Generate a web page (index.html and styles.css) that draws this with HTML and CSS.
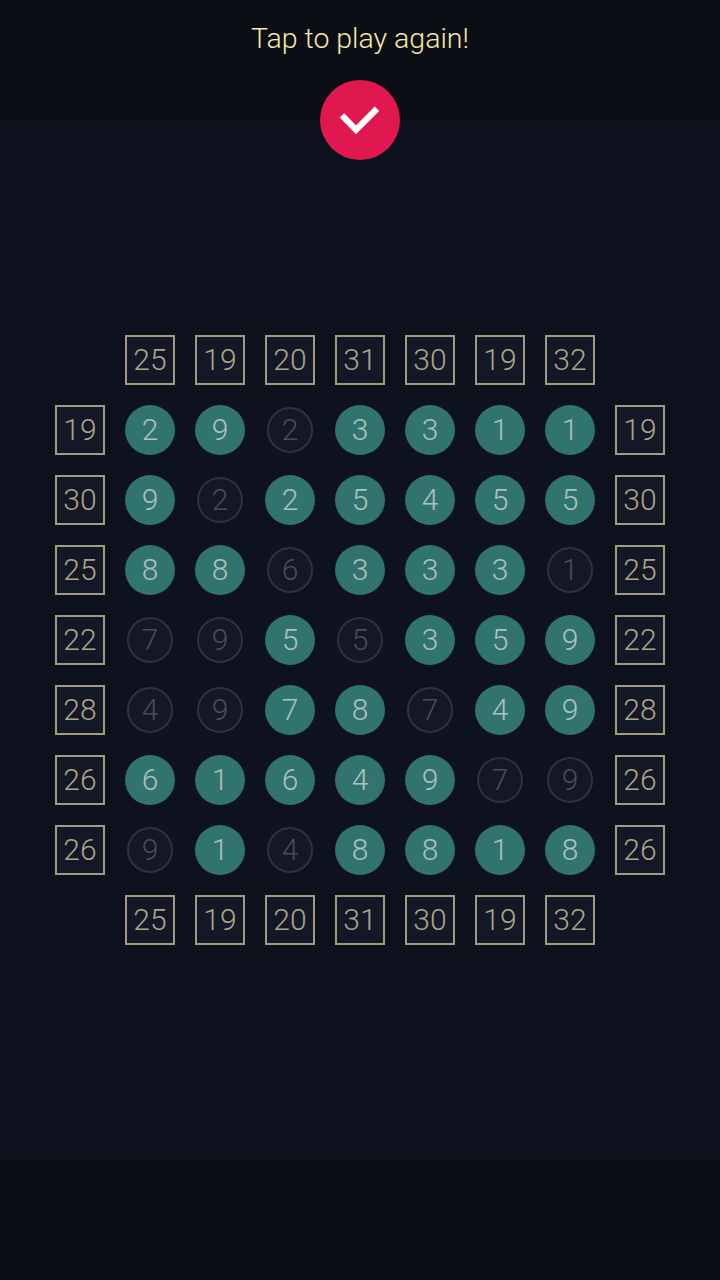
FILE: index.html
```html
<!DOCTYPE html>
<html lang="en">
<head>
    <meta charset="UTF-8">
    <link rel="stylesheet" href="styles.css">
    <title>Tap to play again</title>
</head>
<body>
    <div class="top-bar">
        <div class="message">Tap to play again!</div>
        <div class="check-btn">
            <svg width="40" height="28" viewBox="0 0 40 28"><path d="M2 9.300 L16 23.800 L37 2.700" fill="none" stroke="#fff" stroke-width="6.200"/></svg>
        </div>
    </div>

    <div class="board-wrap">
        <div class="board">
            <div class="cell"></div>
            <div class="cell clue">25</div><div class="cell clue">19</div><div class="cell clue">20</div><div class="cell clue">31</div><div class="cell clue">30</div><div class="cell clue">19</div><div class="cell clue">32</div>
            <div class="cell"></div>

            <div class="cell clue">19</div>
            <div class="cell on">2</div><div class="cell on">9</div><div class="cell off">2</div><div class="cell on">3</div><div class="cell on">3</div><div class="cell on">1</div><div class="cell on">1</div>
            <div class="cell clue">19</div>

            <div class="cell clue">30</div>
            <div class="cell on">9</div><div class="cell off">2</div><div class="cell on">2</div><div class="cell on">5</div><div class="cell on">4</div><div class="cell on">5</div><div class="cell on">5</div>
            <div class="cell clue">30</div>

            <div class="cell clue">25</div>
            <div class="cell on">8</div><div class="cell on">8</div><div class="cell off">6</div><div class="cell on">3</div><div class="cell on">3</div><div class="cell on">3</div><div class="cell off">1</div>
            <div class="cell clue">25</div>

            <div class="cell clue">22</div>
            <div class="cell off">7</div><div class="cell off">9</div><div class="cell on">5</div><div class="cell off">5</div><div class="cell on">3</div><div class="cell on">5</div><div class="cell on">9</div>
            <div class="cell clue">22</div>

            <div class="cell clue">28</div>
            <div class="cell off">4</div><div class="cell off">9</div><div class="cell on">7</div><div class="cell on">8</div><div class="cell off">7</div><div class="cell on">4</div><div class="cell on">9</div>
            <div class="cell clue">28</div>

            <div class="cell clue">26</div>
            <div class="cell on">6</div><div class="cell on">1</div><div class="cell on">6</div><div class="cell on">4</div><div class="cell on">9</div><div class="cell off">7</div><div class="cell off">9</div>
            <div class="cell clue">26</div>

            <div class="cell clue">26</div>
            <div class="cell off">9</div><div class="cell on">1</div><div class="cell off">4</div><div class="cell on">8</div><div class="cell on">8</div><div class="cell on">1</div><div class="cell on">8</div>
            <div class="cell clue">26</div>

            <div class="cell"></div>
            <div class="cell clue">25</div><div class="cell clue">19</div><div class="cell clue">20</div><div class="cell clue">31</div><div class="cell clue">30</div><div class="cell clue">19</div><div class="cell clue">32</div>
            <div class="cell"></div>
        </div>
    </div>

    <div class="bottom-bar"></div>
</body>
</html>
```

FILE: styles.css
```css
body{
    margin: 0;
    padding: 0;
    height: 1280px;
    display: flex;
    flex-direction: column;
    background: #0e121c;
    font-family: Roboto, sans-serif;
    font-weight: 300;
    overflow: hidden;
}
.top-bar{
    height: 120px;
    background: #0b0e15;
    position: relative;
    text-align: center;
}
.message{
    padding-top: 21px;
    font-size: 28.500px;
    line-height: 36px;
    color: #f7e8ab;
}
/* sits half over the bar, half over the board area */
.check-btn{
    position: absolute;
    top: 80px;
    left: 320px;
    width: 80px;
    height: 80px;
    border-radius: 50%;
    background: #df194f;
    display: flex;
    align-items: center;
    justify-content: center;
}
.board-wrap{
    flex: 1;
    display: flex;
    align-items: center;
    justify-content: center;
}
.board{
    display: grid;
    grid-template-columns: repeat(9, 50px);
    grid-auto-rows: 50px;
    gap: 20px;
}
.cell{
    display: flex;
    align-items: center;
    justify-content: center;
    box-sizing: border-box;
    font-size: 30px;
    line-height: 34px;
}
.clue{
    border: 2px solid #a09a7e;
    background: #141726;
    color: #aca586;
}
.on{
    border-radius: 50%;
    background: #31736d;
    color: #adc1bf;
}
.off{
    width: 46px;
    height: 46px;
    margin: 2px;
    border-radius: 50%;
    border: 2px solid #2e3140;
    background: #141724;
    color: #484b58;
}
.bottom-bar{
    height: 120px;
    background: #0b0e15;
}
```
